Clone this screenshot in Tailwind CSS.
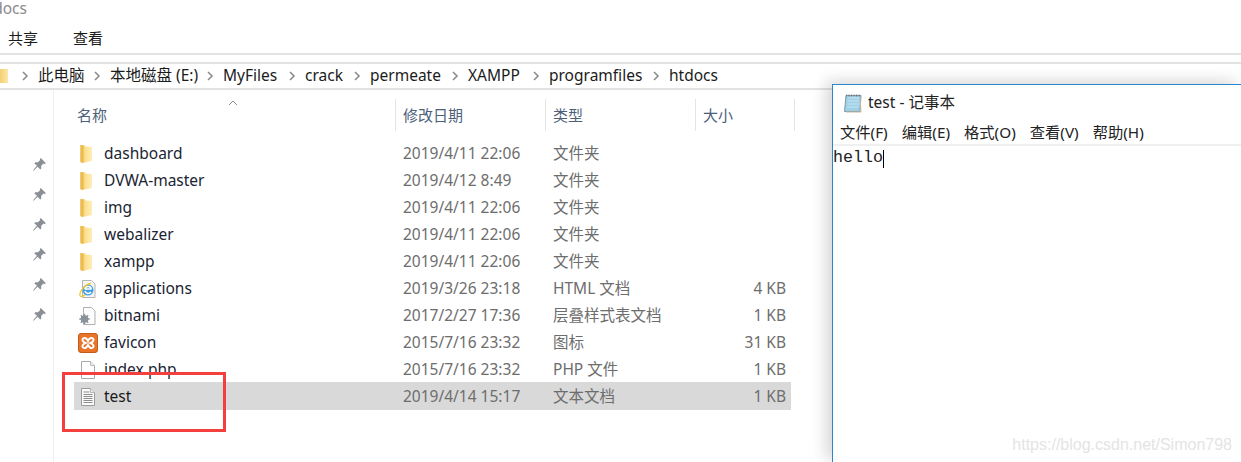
<!doctype html>
<html lang="zh-CN">
<head>
<meta charset="UTF-8" />
<title>htdocs</title>
<script src="https://cdn.jsdelivr.net/npm/@tailwindcss/browser@4"></script>
</head>
<body class="relative w-[1241px] h-[462px] overflow-hidden bg-white font-['Noto_Sans','Noto_Sans_CJK_SC',sans-serif] text-[15.5px] text-[#1b1b1b]">
<svg class="absolute w-0 h-0">
  <defs>
    <linearGradient id="fold" x1="0" x2="1" y1="0" y2="0"><stop offset="0" stop-color="#e9b949"/><stop offset="0.4" stop-color="#fbdf8e"/><stop offset="1" stop-color="#fdeeb8"/></linearGradient>
  </defs>
  <symbol id="folder" viewBox="0 0 20 20"><path d="M2.500 1h4l1 1.500 6.500 .5V17l-9.500 2-2-1z" fill="url(#fold)"/><path d="M2.500 1v17l2 1 1-1V2z" fill="#eebc4e"/></symbol>
  <symbol id="pin" viewBox="0 0 14 14"><path d="M8.200 1l4.800 4.800-1.300.7-1-.4-2.200 2.200.2 2.400-1 1-2.400-2.600L1.500 12.800 1 12.300l3.600-4.100-2.500-2.400 1-1 2.400.2 2.200-2.200-.4-1z" fill="#8a8f96"/></symbol>
  <symbol id="doc" viewBox="0 0 20 20"><path d="M3.500 1.500h9l4 4v13h-13z" fill="#fff" stroke="#a9a9a9"/><path d="M12.500 1.500v4h4" fill="#f1f1f1" stroke="#bdbdbd"/></symbol>
  <symbol id="txt" viewBox="0 0 20 20"><path d="M3.500 1.500h9l4 4v13h-13z" fill="#fafafa" stroke="#9b9b9b"/><path d="M12.500 1.500v4h4" fill="#eee" stroke="#b5b5b5"/><path d="M5.500 5h6M5.500 7.500h9M5.500 9.500h9M5.500 11.500h9M5.500 13.500h9M5.500 15.500h9" stroke="#8d8d8d"/></symbol>
  <symbol id="ie" viewBox="0 0 20 20"><path d="M4.500 1.500h9l3.500 3.500v13.500h-12.500z" fill="#f6f6f6" stroke="#b4b4b4"/><circle cx="10" cy="11" r="5.500" fill="#3f9fe0"/><path d="M6.500 10h7M7 10c.3-3.500 6-3.500 6.300 0M7 11.800c.6 3 4.500 3.500 6 1.200" fill="none" stroke="#fff" stroke-width="1.500"/><path d="M13 4.500C8 4.500 1 13 2 16.500c.8 1.800 3.500.6 5-1" fill="none" stroke="#f0c52c" stroke-width="1.300"/></symbol>
  <symbol id="gear" viewBox="0 0 20 20"><path d="M5.500 1.500h8l3.500 3.500v13.500h-11.500z" fill="#fdfdfd" stroke="#b0b0b0"/><circle cx="6.500" cy="13" r="3.800" fill="#8b9299"/><circle cx="6.500" cy="13" r="1.300" fill="#e8e8e8"/><path d="M6.500 7.800v10.400M1.300 13h10.400M2.800 9.300l7.400 7.400M10.200 9.300l-7.400 7.400" stroke="#8b9299" stroke-width="1.300"/></symbol>
  <symbol id="xampp" viewBox="0 0 20 20"><rect x="0.500" y="0.500" width="19" height="19" rx="2.500" fill="#e8742a" stroke="#c4591a"/><path d="M5 5.500c2.500-1.500 4 .5 5 2.500 1-2 2.500-4 5-2.500 1.500 1.500 0 3.300-2.500 4.500 2.500 1.200 4 3 2.500 4.500-2.500 1.500-4-.5-5-2.500-1 2-2.500 4-5 2.500-1.500-1.500 0-3.300 2.500-4.500-2.500-1.200-4-3-2.500-4.500z" fill="none" stroke="#fff" stroke-width="2"/></symbol>
  <symbol id="chev" viewBox="0 0 8 12"><path d="M2 2l4 4-4 4" fill="none" stroke="#8c8c8c" stroke-width="1.600"/></symbol>
</svg>

<!-- explorer window -->
<div class="flex flex-col h-full">
  <div class="h-[22px] -ml-[22px] text-[#8b8b8b] leading-[17px]">htdocs</div>
  <div class="h-[33px] pt-[2px] flex items-center pl-[8px] gap-[35px] text-[15px] border-b-2 border-[#e3e3e3] box-border leading-none">
    <span>共享</span><span>查看</span>
  </div>
  <div class="mt-[7px] h-[28px] pb-[1px] border-y-2 border-[#e2e2e2] flex items-center box-border">
    <div class="w-[38px] flex justify-between items-center pr-[9px]">
      <span class="w-[8px] h-[14px] bg-gradient-to-r from-[#f3cf72] to-[#fbe7a8]"></span>
      <svg class="w-[8px] h-[12px]"><use href="#chev"/></svg>
    </div>
    <div class="w-[72px] flex justify-between items-center pr-[9px]"><span>此电脑</span><svg class="w-[8px] h-[12px]"><use href="#chev"/></svg></div>
    <div class="w-[113px] flex justify-between items-center pr-[9px]"><span>本地磁盘 (E:)</span><svg class="w-[8px] h-[12px]"><use href="#chev"/></svg></div>
    <div class="w-[82px] flex justify-between items-center pr-[9px]"><span>MyFiles</span><svg class="w-[8px] h-[12px]"><use href="#chev"/></svg></div>
    <div class="w-[65px] flex justify-between items-center pr-[9px]"><span>crack</span><svg class="w-[8px] h-[12px]"><use href="#chev"/></svg></div>
    <div class="w-[98px] flex justify-between items-center pr-[9px]"><span>permeate</span><svg class="w-[8px] h-[12px]"><use href="#chev"/></svg></div>
    <div class="w-[81px] flex justify-between items-center pr-[9px]"><span>XAMPP</span><svg class="w-[8px] h-[12px]"><use href="#chev"/></svg></div>
    <div class="w-[120px] flex justify-between items-center pr-[9px]"><span>programfiles</span><svg class="w-[8px] h-[12px]"><use href="#chev"/></svg></div>
    <span>htdocs</span>
  </div>

  <div class="flex flex-1">
    <!-- quick access pins -->
    <div class="w-[54px] shrink-0 border-r border-[#f0f0f0] flex flex-col items-end gap-[15px] pt-[67px] pr-[6px]">
      <svg class="w-[15px] h-[15px]"><use href="#pin"/></svg>
      <svg class="w-[15px] h-[15px]"><use href="#pin"/></svg>
      <svg class="w-[15px] h-[15px]"><use href="#pin"/></svg>
      <svg class="w-[15px] h-[15px]"><use href="#pin"/></svg>
      <svg class="w-[15px] h-[15px]"><use href="#pin"/></svg>
      <svg class="w-[15px] h-[15px]"><use href="#pin"/></svg>
    </div>

    <div class="pl-[20px] pt-[9px]">
      <!-- column headers -->
      <div class="relative grid grid-cols-[321px_150px_150px_100px] h-[32px] items-center text-[15px] text-[#4c607a] w-[721px]">
        <span class="pl-[3px]">名称</span>
        <span class="pl-[7px] border-l border-[#e5e5e5] h-full flex items-center">修改日期</span>
        <span class="pl-[7px] border-l border-[#e5e5e5] h-full flex items-center">类型</span>
        <span class="pl-[7px] border-x border-[#e5e5e5] h-full flex items-center">大小</span>
        <svg class="absolute left-[154px] top-[1px] w-[10px] h-[6px]" viewBox="0 0 10 6"><path d="M1 5l4-4 4 4" fill="none" stroke="#8f8f8f"/></svg>
      </div>

      <!-- file rows -->
      <div class="mt-[8px] flex flex-col w-[717px] text-[#6d6d6d]">
        <div class="grid grid-cols-[329px_150px_150px_88px] h-[27px] pt-[2px] items-center">
          <span class="flex items-center gap-[6px] pl-[4px] text-[#1a2433]"><svg class="w-[20px] h-[20px]"><use href="#folder"/></svg>dashboard</span><span>2019/4/11 22:06</span><span>文件夹</span><span></span>
        </div>
        <div class="grid grid-cols-[329px_150px_150px_88px] h-[27px] pt-[2px] items-center">
          <span class="flex items-center gap-[6px] pl-[4px] text-[#1a2433]"><svg class="w-[20px] h-[20px]"><use href="#folder"/></svg>DVWA-master</span><span>2019/4/12 8:49</span><span>文件夹</span><span></span>
        </div>
        <div class="grid grid-cols-[329px_150px_150px_88px] h-[27px] pt-[2px] items-center">
          <span class="flex items-center gap-[6px] pl-[4px] text-[#1a2433]"><svg class="w-[20px] h-[20px]"><use href="#folder"/></svg>img</span><span>2019/4/11 22:06</span><span>文件夹</span><span></span>
        </div>
        <div class="grid grid-cols-[329px_150px_150px_88px] h-[27px] pt-[2px] items-center">
          <span class="flex items-center gap-[6px] pl-[4px] text-[#1a2433]"><svg class="w-[20px] h-[20px]"><use href="#folder"/></svg>webalizer</span><span>2019/4/11 22:06</span><span>文件夹</span><span></span>
        </div>
        <div class="grid grid-cols-[329px_150px_150px_88px] h-[27px] pt-[2px] items-center">
          <span class="flex items-center gap-[6px] pl-[4px] text-[#1a2433]"><svg class="w-[20px] h-[20px]"><use href="#folder"/></svg>xampp</span><span>2019/4/11 22:06</span><span>文件夹</span><span></span>
        </div>
        <div class="grid grid-cols-[329px_150px_150px_88px] h-[27px] pt-[2px] items-center">
          <span class="flex items-center gap-[6px] pl-[4px] text-[#1a2433]"><svg class="w-[20px] h-[20px]"><use href="#ie"/></svg>applications</span><span>2019/3/26 23:18</span><span>HTML 文档</span><span class="text-right pr-[5px]">4 KB</span>
        </div>
        <div class="grid grid-cols-[329px_150px_150px_88px] h-[27px] pt-[2px] items-center">
          <span class="flex items-center gap-[6px] pl-[4px] text-[#1a2433]"><svg class="w-[20px] h-[20px]"><use href="#gear"/></svg>bitnami</span><span>2017/2/27 17:36</span><span>层叠样式表文档</span><span class="text-right pr-[5px]">1 KB</span>
        </div>
        <div class="grid grid-cols-[329px_150px_150px_88px] h-[27px] pt-[2px] items-center">
          <span class="flex items-center gap-[6px] pl-[4px] text-[#1a2433]"><svg class="w-[20px] h-[20px]"><use href="#xampp"/></svg>favicon</span><span>2015/7/16 23:32</span><span>图标</span><span class="text-right pr-[5px]">31 KB</span>
        </div>
        <div class="grid grid-cols-[329px_150px_150px_88px] h-[27px] pt-[2px] items-center">
          <span class="flex items-center gap-[6px] pl-[4px] text-[#1a2433]"><svg class="w-[20px] h-[20px]"><use href="#doc"/></svg>index.php</span><span>2015/7/16 23:32</span><span>PHP 文件</span><span class="text-right pr-[5px]">1 KB</span>
        </div>
        <div class="grid grid-cols-[329px_150px_150px_88px] h-[28px] pt-[2px] items-center bg-[#d9d9d9]">
          <span class="flex items-center gap-[6px] pl-[4px] text-[#1a1a1a]"><svg class="w-[20px] h-[20px]"><use href="#txt"/></svg>test</span><span>2019/4/14 15:17</span><span>文本文档</span><span class="text-right pr-[5px]">1 KB</span>
        </div>
      </div>
    </div>
  </div>
</div>

<!-- red annotation -->
<div class="absolute left-[62px] top-[372px] w-[164px] h-[60px] border-[3px] border-[#f43f3f]"></div>

<!-- notepad window -->
<div class="absolute left-[832px] top-[84px] w-[409px] h-[378px] bg-white border-l border-t border-[#2b86cf] shadow-[-6px_-3px_14px_rgba(0,0,0,0.16)]">
  <div class="h-[35px] flex items-center pl-[10px] gap-[5px] text-[15.5px] text-[#222]">
    <svg class="w-[20px] h-[20px]" viewBox="0 0 20 20">
      <path d="M3 2.500h15l-1 16H1.500z" fill="#9fd0e8" stroke="#7f98a6"/>
      <path d="M5 5h11M4.500 8h11.500M4.300 11h11.500M4 14h11.500" stroke="#c8e6f3"/>
      <path d="M3.500 1.500v2M6 1.500v2M8.500 1.500v2M11 1.500v2M13.500 1.500v2M16 1.500v2" stroke="#777"/>
      <path d="M17 4l1 15H3" fill="none" stroke="#c9b99b"/>
    </svg>
    <span>test - 记事本</span>
  </div>
  <div class="h-[26px] flex items-center pl-[7px] gap-[14px] text-[15.3px] text-[#222] border-b-2 border-[#f0f0f0] box-border">
    <span>文件(F)</span><span>编辑(E)</span><span>格式(O)</span><span>查看(V)</span><span>帮助(H)</span>
  </div>
  <div class="flex items-center h-[25px] font-['Liberation_Mono',monospace] text-[16.67px] text-[#222] leading-none">
    <span>hello</span><span class="w-px h-[18px] bg-black"></span>
  </div>
</div>

<!-- watermark -->
<div class="absolute right-[9px] bottom-[9px] font-['Liberation_Sans',sans-serif] text-[16px] leading-none text-[#e4e4e4]">https://blog.csdn.net/Simon798</div>
</body>
</html>
